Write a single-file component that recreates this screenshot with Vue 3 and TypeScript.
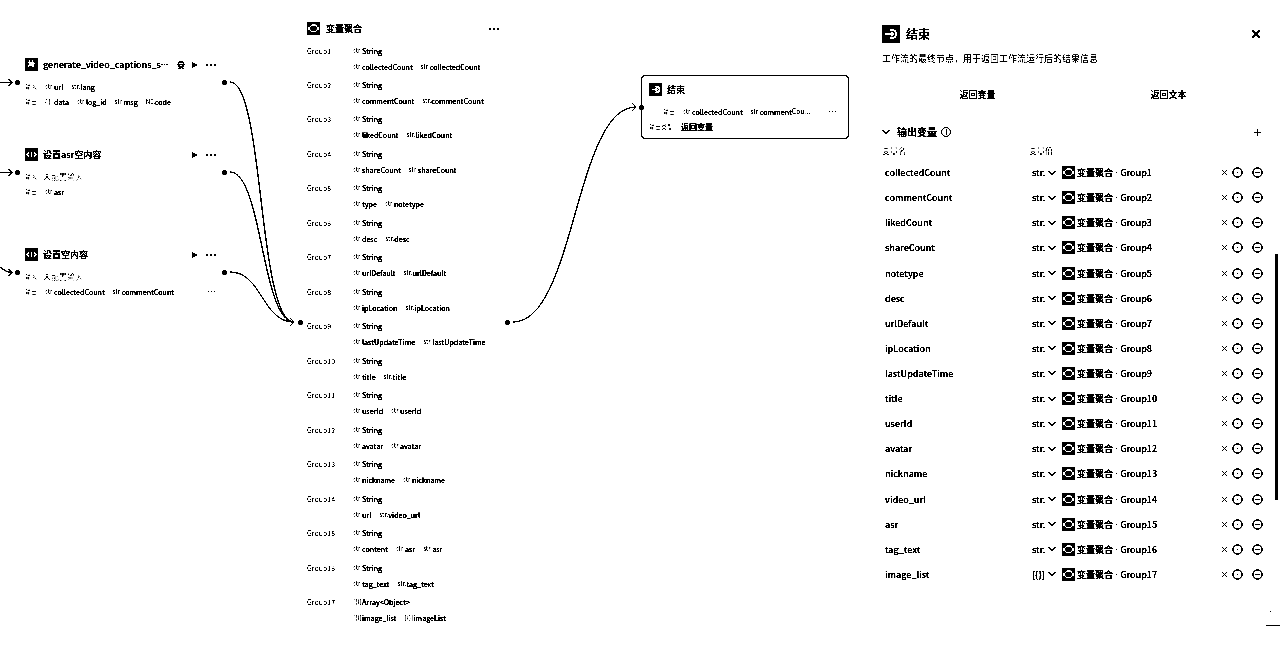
<script setup lang="ts">
import { ref } from 'vue'

interface Token { type: string; name: string }
interface FlowNode {
  id: string
  title: string
  cut?: boolean
  kind: 'plugin' | 'code'
  inputs: Token[]
  outputs: Token[]
  more?: boolean
}
interface Group { values: Token[]; type: string; label: string }

const s = (name: string): Token => ({ type: 'str.', name })

const nodes: FlowNode[] = [
  {
    id: 'captions',
    title: 'generate_video_captions_s',
    cut: true,
    kind: 'plugin',
    inputs: [s('url'), s('lang')],
    outputs: [{ type: '{ }', name: 'data' }, s('log_id'), s('msg'), { type: 'N0.', name: 'code' }],
  },
  { id: 'asr', title: '设置asr空内容', kind: 'code', inputs: [], outputs: [s('asr')] },
  {
    id: 'empty',
    title: '设置空内容',
    kind: 'code',
    inputs: [],
    outputs: [s('collectedCount'), s('commentCount')],
    more: true,
  },
]

const pairs: string[][] = [
  ['collectedCount', 'collectedCount'],
  ['commentCount', 'commentCount'],
  ['likedCount', 'likedCount'],
  ['shareCount', 'shareCount'],
  ['type', 'notetype'],
  ['desc', 'desc'],
  ['urlDefault', 'urlDefault'],
  ['ipLocation', 'ipLocation'],
  ['lastUpdateTime', 'lastUpdateTime'],
  ['title', 'title'],
  ['userId', 'userId'],
  ['avatar', 'avatar'],
  ['nickname', 'nickname'],
  ['url', 'video_url'],
  ['content', 'asr', 'asr'],
  ['tag_text', 'tag_text'],
  ['image_list', 'imageList'],
]
const groups: Group[] = pairs.map((names, i) => {
  const type = i === 16 ? '[{}]' : 'str.'
  return {
    label: i === 16 ? 'Array<Object>' : 'String',
    type,
    values: names.map((name) => ({ type, name })),
  }
})

const outputs = ref(
  [
    'collectedCount', 'commentCount', 'likedCount', 'shareCount', 'notetype', 'desc',
    'urlDefault', 'ipLocation', 'lastUpdateTime', 'title', 'userId', 'avatar',
    'nickname', 'video_url', 'asr', 'tag_text', 'image_list',
  ].map((name, i) => ({ name, type: i === 16 ? '[{}]' : 'str.' })),
)
</script>

<template>
  <main class="app">
    <section class="canvas">
      <svg class="edges" width="870" height="665" viewBox="0 0 870 665" aria-hidden="true">
        <path d="M0 82.5H12M8 78.5L12 82.5L8 86.5" />
        <path d="M0 172.5H12M8 168.5L12 172.5L8 176.5" />
        <path d="M0 267C4 270 7 272.5 12 272.5M8 268.5L12 272.5L8 276.5" />
        <path d="M230 82C264 82 258 322 294 322" />
        <path d="M230 172C262 172 262 322 294 322" />
        <path d="M230 272C262 272 262 322 294 322" />
        <path d="M290 318L294 322L290 326" />
        <path d="M513 322C575 322 575 107 636 107M632 103L636 107L632 111" />
      </svg>

      <article v-for="n in nodes" :key="n.id" class="node" :class="n.id">
        <i class="port left"></i><i class="port right"></i>
        <header>
          <svg class="icon" viewBox="0 0 13 13">
            <rect width="13" height="13" rx="1" />
            <path v-if="n.kind === 'code'" class="code" d="M4.5 3.5L2 6.5L4.5 9.5M8.5 3.5L11 6.5L8.5 9.5M7 3.5L6 9.5" />
            <path v-else class="solid" d="M4 2H5V4H7V2H8V4L10 5V6H9V8L10 9H7V8H5L4 9H3V7H4V5H3V4H4Z" />
          </svg>
          <h2>{{ n.title }}<span v-if="n.cut" class="latin">···</span></h2>
          <svg v-if="n.kind === 'plugin'" class="badge" viewBox="0 0 8 8">
            <path d="M1.5 3V1H6.5V3M0.5 3.5H7.5M2 3.5V6H6V3.5M1 7.5H3.5M5 7.5H7" />
          </svg>
          <button class="play" aria-label="运行"><svg viewBox="0 0 8 8"><path d="M1 1L7 4L1 7Z" /></svg></button>
          <button class="dots" aria-label="更多"><i></i><i></i><i></i></button>
        </header>
        <div class="line">
          <span class="key">输入</span>
          <span v-if="!n.inputs.length" class="none">未配置输入</span>
          <span v-for="t in n.inputs" :key="t.name" class="token"><small>{{ t.type }}</small>{{ t.name }}</span>
        </div>
        <div class="line">
          <span class="key">输出</span>
          <span v-for="t in n.outputs" :key="t.name" class="token"><small>{{ t.type }}</small>{{ t.name }}</span>
          <button v-if="n.more" class="dots mini" aria-label="更多变量"><i></i><i></i><i></i></button>
        </div>
      </article>

      <article class="node merge">
        <i class="port left"></i><i class="port right"></i>
        <header>
          <svg class="icon" viewBox="0 0 13 13">
            <rect width="13" height="13" rx="1" />
            <path class="thin" d="M5 3H8.5L10 4.5V8L8.5 9.5H4.5L3 8V4.5L5 3M1.5 5V8M11.5 5V8M5.5 5.5V6.5M7.5 6.5V7.5" />
          </svg>
          <h2>变量聚合</h2>
          <button class="dots" aria-label="更多"><i></i><i></i><i></i></button>
        </header>
        <dl class="groups">
          <div v-for="(g, i) in groups" :key="i" class="group">
            <dt>Group{{ i + 1 }}</dt>
            <dd><span class="token"><small>{{ g.type }}</small>{{ g.label }}</span></dd>
            <dd class="second">
              <span v-for="(t, k) in g.values" :key="k" class="token"><small>{{ t.type }}</small>{{ t.name }}</span>
            </dd>
          </div>
        </dl>
      </article>

      <article class="node end">
        <i class="port left"></i>
        <header>
          <svg class="icon" viewBox="0 0 13 13">
            <rect width="13" height="13" rx="1" />
            <path d="M5.5 3.5H7.5A3 3 0 0 1 7.5 9.5H5.5M2.5 6.5H8M6.5 5L8 6.5L6.5 8" />
          </svg>
          <h2>结束</h2>
        </header>
        <div class="line indent">
          <span class="key">输出</span>
          <span class="token"><small>str.</small>collectedCount</span>
          <span class="token"><small>str.</small>comment<em>Cou<span class="latin">...</span></em></span>
          <button class="dots mini" aria-label="更多变量"><i></i><i></i><i></i></button>
        </div>
        <div class="line">
          <span class="key wide">输出类型</span><span class="value">返回变量</span>
        </div>
      </article>
    </section>

    <aside class="panel">
      <header class="panel-head">
        <svg class="big" viewBox="0 0 18 18">
          <rect width="18" height="18" rx="1" />
          <path d="M7.5 5H10A4 4 0 0 1 10 13H7.5M3 9H11M9 7L11 9L9 11" />
        </svg>
        <h1>结束</h1>
        <button class="close" aria-label="关闭"><svg viewBox="0 0 10 10"><path d="M1 1L9 9M9 1L1 9" /></svg></button>
      </header>
      <p class="desc">工作流的最终节点，用于返回工作流运行后的结果信息</p>
      <nav class="tabs"><button>返回变量</button><button>返回文本</button></nav>
      <div class="section">
        <button class="fold" aria-label="折叠"><svg viewBox="0 0 8 6"><path d="M0.5 1L4 4.5L7.5 1" /></svg></button>
        <h3>输出变量</h3>
        <svg class="info" viewBox="0 0 10 10"><circle cx="5" cy="5" r="4.4" /><path d="M5.5 2.5V3.5M5.5 4.5V7.5" /></svg>
        <button class="add" aria-label="新增"><svg viewBox="0 0 7 7"><path d="M0 3.5H7M3.5 0V7" /></svg></button>
      </div>
      <div class="cols"><span>变量名</span><span>变量值</span></div>
      <ul class="rows">
        <li v-for="(o, i) in outputs" :key="i">
          <input v-model="o.name" type="text" aria-label="变量名" />
          <button class="type"><span>{{ o.type }}</span><svg viewBox="0 0 8 6"><path d="M0.5 1L4 4.5L7.5 1" /></svg></button>
          <span class="ref">
            <svg class="icon" viewBox="0 0 13 13">
              <rect width="13" height="13" rx="1" />
              <path class="thin" d="M5 3H8.5L10 4.5V8L8.5 9.5H4.5L3 8V4.5L5 3M1.5 5V8M11.5 5V8M5.5 5.5V6.5M7.5 6.5V7.5" />
            </svg>
            <span>变量聚合<span class="latin"> · </span>Group{{ i + 1 }}</span>
          </span>
          <button class="clear" aria-label="清除"><svg viewBox="0 0 5 5"><path d="M0.5 0.5L4.5 4.5M4.5 0.5L0.5 4.5" /></svg></button>
          <button class="round" aria-label="设置"><svg viewBox="0 0 11 11"><circle cx="5.5" cy="5.5" r="4.6" /><path d="M5 5.5H6.2" /></svg></button>
          <button class="round last" aria-label="删除"><svg viewBox="0 0 11 11"><circle cx="5.5" cy="5.5" r="4.6" /><path d="M3.5 5.5H7.5" /></svg></button>
        </li>
      </ul>
      <i class="thumb"></i>
      <i class="speck"></i>
      <i class="corner"></i>
    </aside>
  </main>
</template>

<style>
body { margin: 0; background: #fff; }
</style>

<style scoped>
.app {
  display: flex;
  min-height: 100vh;
  overflow: hidden;
  background: #fff;
  color: #000;
  font-family: "Noto Sans CJK SC", "Noto Sans", sans-serif;
  font-weight: 500;
  filter: grayscale(1) brightness(0.7) contrast(20);
}
h1, h2, h3, p, ul, dl, dd, dt { margin: 0; padding: 0; }
i, em { font-style: normal; }
button { display: flex; align-items: center; justify-content: center; border: 0; padding: 0; background: none; color: inherit; font: inherit; }
svg { display: block; flex: none; fill: none; stroke: #000; stroke-width: 1; }
.latin { font-family: "Noto Sans", sans-serif; }

.canvas { position: relative; flex: 1; min-width: 0; }
.edges { position: absolute; left: 0; top: 0; }
.node { position: absolute; box-sizing: border-box; width: 207px; padding: 0 9px 0 7px; font-size: 7px; }
.captions { left: 18px; top: 57px; }
.asr { left: 18px; top: 147px; }
.empty { left: 18px; top: 247px; }
.merge { left: 301px; top: 21px; padding-left: 6px; }
.end { left: 641px; top: 75px; width: 208px; height: 64px; padding: 6px 11px 0 7px; border: 1px solid #000; border-radius: 4px; }

.port { position: absolute; top: 23px; width: 5px; height: 5px; border-radius: 50%; background: #000; }
.port.left { left: -3px; }
.port.right { right: -2px; }
.merge .port { top: 299px; }
.end .port { top: 29px; left: -3px; }

.node header { display: flex; align-items: center; height: 15px; }
.icon { width: 13px; height: 13px; }
.icon rect, .big rect { fill: #000; stroke: none; }
.icon path, .big path { stroke: #fff; stroke-width: 1.8; }
.big path { stroke-width: 2.4; }
.icon .code { stroke-width: 1.5; }
.icon .thin { stroke-width: 1.3; }
.icon .solid { fill: #fff; stroke: none; }
h2 { flex: 1; min-width: 0; margin-left: 5px; font-size: 9px; line-height: 14px; font-weight: 500; white-space: nowrap; }
.merge h2 { margin-left: 6px; }
.badge { width: 8px; height: 8px; margin-right: 6px; }
.play svg { width: 8px; height: 8px; fill: #000; stroke: none; }
.dots { gap: 2px; width: 10px; height: 8px; margin-left: 7px; }
.dots i { width: 2px; height: 2px; background: #000; }
.dots.mini { gap: 2px; margin-left: auto; }
.dots.mini i { width: 1px; height: 1px; }

.line { display: flex; align-items: center; height: 15px; white-space: nowrap; }
.node header + .line { margin-top: 7px; }
.key { width: 20px; flex: none; font-size: 6px; color: #888; }
.none { margin-left: -2px; font-size: 8px; font-weight: 400; color: #888; }
.token { display: inline-flex; align-items: center; margin-right: 8px; line-height: 10px; white-space: nowrap; }
.token small { width: 9px; font-size: 6px; color: #777; white-space: nowrap; }
.token em { color: #777; }
.line.indent { padding-left: 14px; }
.key.wide { width: 32px; }
.value { font-size: 8px; }

.groups { display: grid; grid-auto-rows: 1fr; height: 586px; margin-top: 9px; }
.group { display: grid; grid-template-columns: 46px 1fr; grid-template-rows: 11px 11px; row-gap: 5px; align-items: center; align-content: start; }
.group dt { font-size: 7px; line-height: 10px; font-weight: 400; color: #666; }
.group dd { display: flex; }
.group .second { grid-column: 2; }

.panel { position: relative; box-sizing: border-box; width: 410px; flex: none; padding: 25px 16px 0 12px; font-size: 9px; }
.panel-head { display: flex; align-items: center; height: 18px; }
.big { width: 18px; height: 18px; }
h1 { flex: 1; margin-left: 6px; font-size: 12px; line-height: 18px; font-weight: 500; }
.close { width: 16px; height: 16px; }
.close svg { width: 10px; height: 10px; stroke-width: 1.1; }
.desc { margin-top: 9px; line-height: 14px; font-weight: 400; color: #666; }
.tabs { display: grid; grid-template-columns: 1fr 1fr; height: 20px; margin-top: 18px; }
.section { display: flex; align-items: center; height: 20px; margin-top: 18px; }
.fold svg { width: 8px; height: 6px; }
h3 { margin: 0 4px 0 7px; font-size: 10px; line-height: 14px; font-weight: 500; }
.info { width: 10px; height: 10px; stroke-width: 0.8; }
.add { width: 14px; height: 14px; margin-left: auto; }
.add svg { width: 7px; height: 7px; }
.cols { display: grid; grid-template-columns: 147px 1fr; margin-top: 4px; font-size: 8px; line-height: 10px; font-weight: 400; color: #888; }
.rows { display: grid; grid-auto-rows: 1fr; height: 427px; margin-top: 4px; list-style: none; }
.rows li { display: flex; align-items: center; }
.rows input { box-sizing: border-box; width: 147px; height: 16px; border: 0; padding: 0 3px; outline: 0; background: none; color: inherit; font: inherit; }
.type { width: 27px; margin-left: 3px; justify-content: space-between; }
.type svg { width: 8px; height: 6px; margin-right: 3px; }
.ref { display: flex; flex: 1; align-items: center; gap: 2px; margin-left: 3px; white-space: nowrap; }
.clear svg { width: 5px; height: 5px; }
.round { margin-left: 5px; }
.round svg { width: 11px; height: 11px; stroke-width: 0.9; }
.round.last { margin: 0 1px 0 9px; }
.thumb { position: absolute; right: 2px; top: 254px; width: 3px; height: 246px; border-radius: 2px; background: #000; }
.speck { position: absolute; right: 9px; top: 611px; width: 1px; height: 1px; background: #000; }
.corner { position: absolute; right: 0; top: 625px; width: 14px; height: 1px; background: #000; }
</style>
